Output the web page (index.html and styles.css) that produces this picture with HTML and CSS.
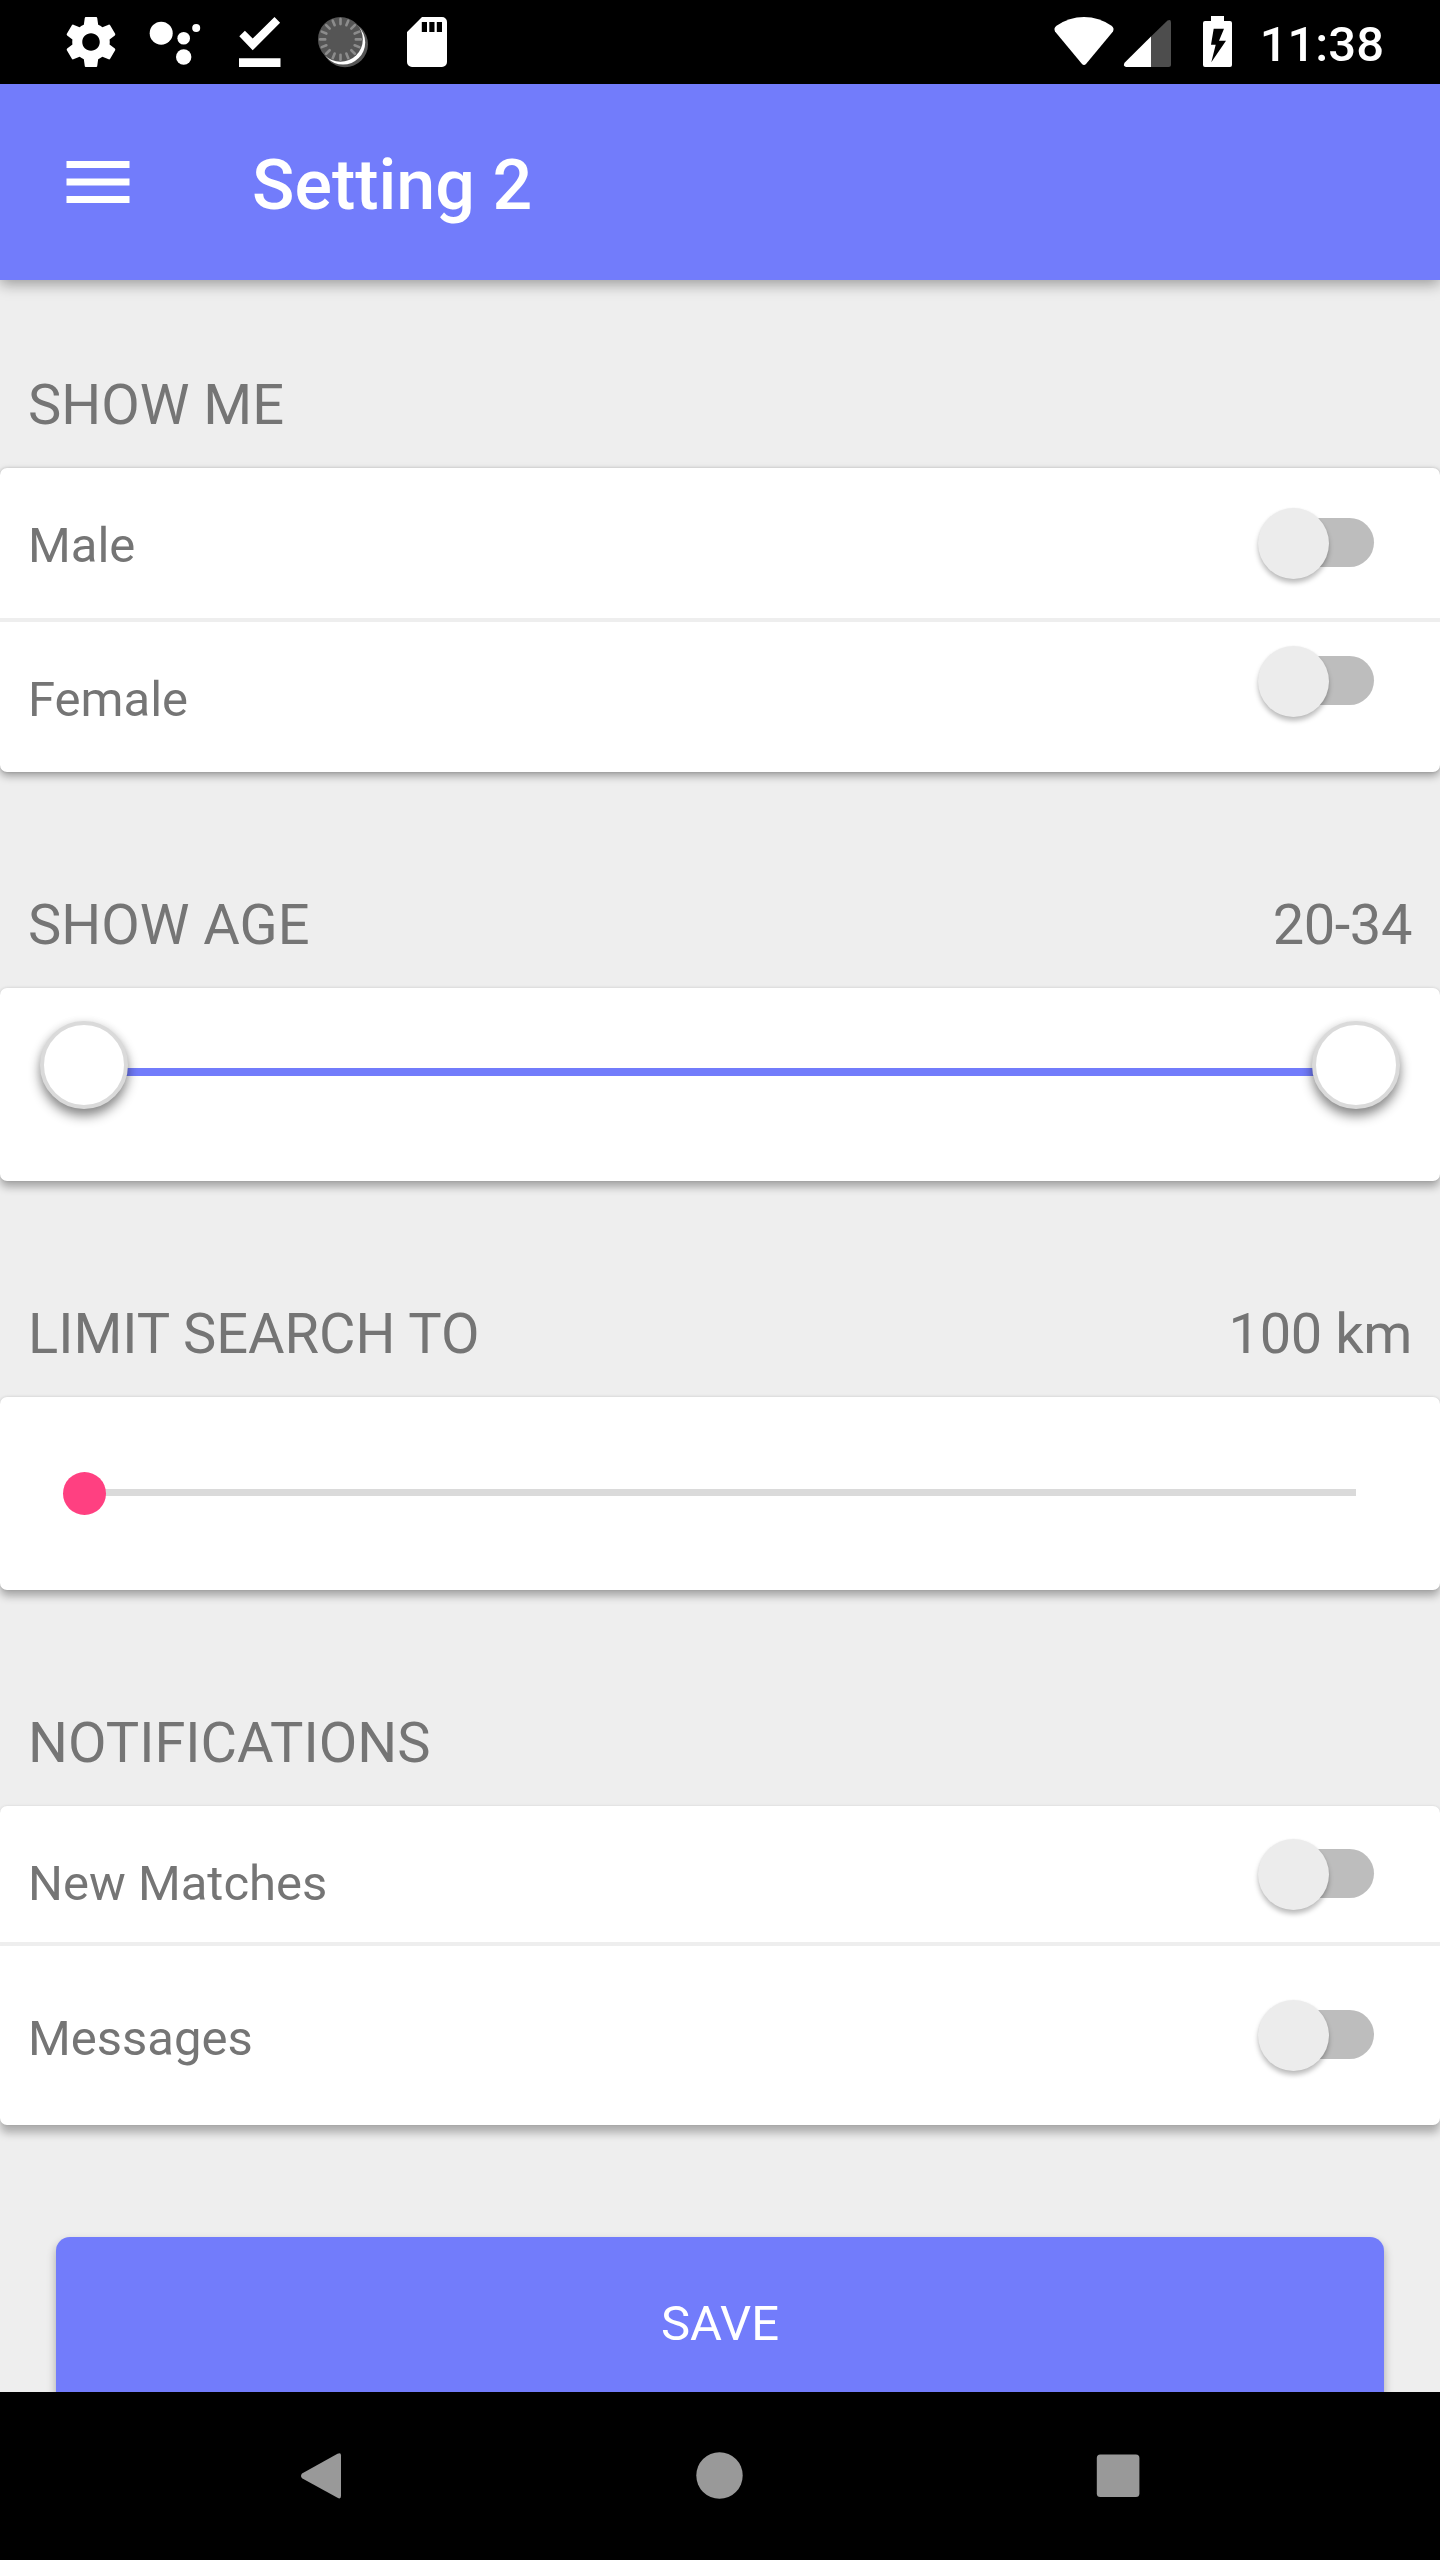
FILE: index.html
```html
<!DOCTYPE html>
<html lang="en">
<head>
<meta charset="utf-8">
<title>Setting 2</title>
<link rel="stylesheet" href="styles.css">
</head>
<body>
<div class="screen">
  <header class="status">
    <svg class="status-left" width="460" height="84" viewBox="0 0 460 84">
      <path fill="#fff" transform="translate(61 12) scale(2.5)" d="M19.43 12.98c.04-.32.07-.64.07-.98s-.03-.66-.07-.98l2.11-1.65c.19-.15.24-.42.12-.64l-2-3.46c-.12-.22-.39-.3-.61-.22l-2.49 1c-.52-.4-1.08-.73-1.69-.98l-.38-2.65C14.46 2.18 14.25 2 14 2h-4c-.25 0-.46.18-.49.42l-.38 2.65c-.61.25-1.17.59-1.69.98l-2.49-1c-.23-.09-.49 0-.61.22l-2 3.46c-.13.22-.07.49.12.64l2.11 1.65c-.04.32-.07.65-.07.98s.03.66.07.98l-2.11 1.65c-.19.15-.24.42-.12.64l2 3.46c.12.22.39.3.61.22l2.49-1c.52.4 1.08.73 1.69.98l.38 2.65c.03.24.24.42.49.42h4c.25 0 .46-.18.49-.42l.38-2.65c.61-.25 1.17-.59 1.69-.98l2.49 1c.23.09.49 0 .61-.22l2-3.46c.12-.22.07-.49-.12-.64l-2.11-1.65zM12 15.5c-1.93 0-3.5-1.57-3.5-3.5s1.57-3.5 3.5-3.5 3.5 1.57 3.5 3.5-1.57 3.5-3.5 3.5z"/>
      <g fill="#fff">
        <circle cx="161.2" cy="33.2" r="11.5"/>
        <circle cx="183.7" cy="38.2" r="6.3"/>
        <circle cx="196.2" cy="28" r="4"/>
        <circle cx="183.7" cy="57" r="7.7"/>
        <path d="M239.3 36.3l5.6-5.6 7.8 7.8 21.8-21.4 5.6 5.6-27.4 27.6z"/>
        <path d="M239 58.3h41.5V67H239z"/>
      </g>
      <circle cx="345" cy="44.2" r="23" fill="#555"/>
      <circle cx="343" cy="42.4" r="22.2" fill="#fff"/>
      <circle cx="340.4" cy="39.4" r="22.4" fill="#555"/>
      <g stroke="#8c8c8c" stroke-width="2.6" stroke-linecap="round" transform="translate(340.5 39.4)">
        <g id="ticks">
          <path d="M0-20.3v5M0 20.3v-5M-20.3 0h5M20.3 0h-5"/>
        </g>
        <use href="#ticks" transform="rotate(22.5)"/>
        <use href="#ticks" transform="rotate(45)"/>
        <use href="#ticks" transform="rotate(67.5)"/>
      </g>
      <path fill="#fff" fill-rule="evenodd" d="M422 17h20a5 5 0 0 1 5 5v40a5 5 0 0 1-5 5h-30a5 5 0 0 1-5-5V32zM421.8 22v10h5.2V22zM429.3 22v10h5.2V22zM436.8 22v10h5.2V22z"/>
    </svg>
    <div class="status-right">
      <svg width="182" height="84" viewBox="1052 0 182 84">
        <path fill="#fff" d="M1055 31.500Q1053.400 28 1056.500 25.800Q1069 17 1084 17T1111.500 25.800Q1114.600 28 1113 31.500L1086.200 63.800Q1084 66.400 1081.800 63.800z"/>
        <path fill="#4d4d4d" d="M1151 36.500L1167.500 20.600Q1171 18.800 1171 22.500V64.500Q1171 67 1168.500 67H1151z"/>
        <path fill="#fff" d="M1151 36.500V67H1126Q1122.400 66 1124.800 62.500z"/>
        <path fill="#fff" d="M1211 16h13v5h6a2 2 0 0 1 2 2v42a2 2 0 0 1-2 2h-25a2 2 0 0 1-2-2V23a2 2 0 0 1 2-2h6z"/>
        <path d="M1213.700 28.700H1224L1219 40.700H1226L1211.300 62.300L1215.700 44.700H1211z"/>
      </svg>
      <span class="clock">11:38</span>
    </div>
  </header>

  <div class="appbar">
    <svg width="84" height="84" viewBox="0 0 24 24"><path fill="#fff" d="M3 18h18v-2H3v2zm0-5h18v-2H3v2zm0-7v2h18V6H3z"/></svg>
    <h1 class="title">Setting 2</h1>
  </div>

  <main class="content">
    <div class="heading heading-first"><span>SHOW ME</span></div>
    <section class="card low">
      <div class="row"><span class="label">Male</span><span class="switch male"></span></div>
      <div class="row"><span class="label">Female</span><span class="switch female"></span></div>
    </section>

    <div class="heading"><span>SHOW AGE</span><span class="value">20-34</span></div>
    <section class="card slider-card range">
      <span class="handle"></span><span class="range-line"></span><span class="handle"></span>
    </section>

    <div class="heading"><span>LIMIT SEARCH TO</span><span class="value">100 km</span></div>
    <section class="card slider-card seek">
      <span class="dot"></span><span class="seek-line"></span>
    </section>

    <div class="heading"><span>NOTIFICATIONS</span></div>
    <section class="card high">
      <div class="row matches-row"><span class="label">New Matches</span><span class="switch matches"></span></div>
      <div class="row messages-row"><span class="label">Messages</span><span class="switch messages"></span></div>
    </section>

    <button class="save">SAVE</button>
  </main>

  <nav class="navbar">
    <svg width="1440" height="168" viewBox="0 2392 1440 168" fill="#999">
      <path d="M302 2473.400L337.500 2453.800Q341 2452 341 2455.500V2496Q341 2499.600 337.500 2497.800L302 2478.200Q300 2475.800 302 2473.400z"/>
      <circle cx="719.500" cy="2475.500" r="23.200"/>
      <rect x="1096.800" y="2454.500" width="42.600" height="42.600" rx="3.500"/>
    </svg>
  </nav>
</div>
</body>
</html>
```
FILE: styles.css
```css
* { box-sizing: border-box; }

body {
  margin: 0;
  font-family: Roboto, "Liberation Sans", sans-serif;
  color: #757575;
}

.screen {
  display: flex;
  flex-direction: column;
  width: 1440px;
  height: 2560px;
  overflow: hidden;
  background: #eee;
}

.status {
  display: flex;
  justify-content: space-between;
  flex: none;
  height: 84px;
  padding-right: 56px;
  background: #000;
  color: #fff;
}

.status-right { display: flex; gap: 26px; }

.clock {
  padding-top: 16px;
  font-size: 49px;
  font-weight: 500;
  line-height: 58px;
}

.appbar {
  display: flex;
  align-items: flex-start;
  flex: none;
  gap: 112px;
  height: 196px;
  padding: 56px;
  background: #727cfb;
  box-shadow: 0 4px 14px rgba(0, 0, 0, .36);
  z-index: 1;
}

.title {
  margin: 4px 0 0;
  color: #fff;
  font-size: 70px;
  font-weight: 500;
  line-height: 82px;
  white-space: nowrap;
}

.content { height: 2112px; overflow: hidden; }

.heading {
  display: flex;
  align-items: flex-end;
  justify-content: space-between;
  height: 216px;
  padding: 0 28px 30px;
  font-size: 56px;
  line-height: 66px;
}

.heading-first { height: 188px; }

.value { letter-spacing: -.4px; }

.card {
  border-radius: 7px;
  background: #fff;
  box-shadow: 0 6px 8px rgba(0, 0, 0, .3), 0 0 3px rgba(0, 0, 0, .12);
}

.low { box-shadow: 0 4px 8px rgba(0, 0, 0, .34), 0 0 3px rgba(0, 0, 0, .16); }
.high { box-shadow: 0 8px 8px rgba(0, 0, 0, .27), 0 0 3px rgba(0, 0, 0, .1); }

.row {
  display: flex;
  align-items: flex-start;
  justify-content: space-between;
  height: 150px;
  padding: 0 66px 0 28px;
}

.row + .row { box-sizing: content-box; border-top: 4px solid #eee; }

.label {
  padding-top: 49px;
  font-size: 49px;
  line-height: 58px;
}

.matches-row { height: 136px; }
.messages-row { height: 179px; }
.messages-row .label { padding-top: 64px; }

.switch {
  display: flow-root;
  width: 98px;
  height: 49px;
  border-radius: 25px;
  background: #bdbdbd;
}

.switch::before {
  content: "";
  display: block;
  width: 71px;
  height: 71px;
  margin: -10px 0 0 -18px;
  border-radius: 50%;
  background: #ececec;
  box-shadow: 0 4px 5px rgba(0, 0, 0, .26), 0 0 2px rgba(0, 0, 0, .05);
}

.male { margin-top: 50px; }
.female { margin-top: 34px; }
.matches { margin-top: 43px; }
.messages { margin-top: 64px; }

.slider-card { display: flex; height: 193px; }

.range { padding: 33px 40px 0; }

.handle {
  position: relative;
  flex: none;
  width: 88px;
  height: 88px;
  border: 4px solid #dadada;
  border-radius: 50%;
  background: #fff;
  box-shadow: 0 7px 12px rgba(0, 0, 0, .46), 0 0 8px rgba(0, 0, 0, .06);
}

.range-line {
  flex: 1;
  height: 8px;
  margin: 47px -4px 0;
  background: #727cfb;
}

.seek { padding: 75px 84px 0 63px; }

.dot {
  position: relative;
  flex: none;
  width: 43px;
  height: 43px;
  border-radius: 50%;
  background: #ff4081;
}

.seek-line {
  flex: 1;
  height: 7px;
  margin: 17px 0 0 -4px;
  background: #dadada;
}

.save {
  display: block;
  width: 1328px;
  margin: 112px auto 0;
  padding: 58px 0 80px;
  border: 0;
  border-radius: 14px;
  background: #727cfb;
  box-shadow: 0 5px 10px rgba(0, 0, 0, .3);
  color: #fff;
  font: 49px/58px Roboto, "Liberation Sans", sans-serif;
}

.navbar { flex: none; height: 168px; background: #000; }
.navbar svg { display: block; }
```
